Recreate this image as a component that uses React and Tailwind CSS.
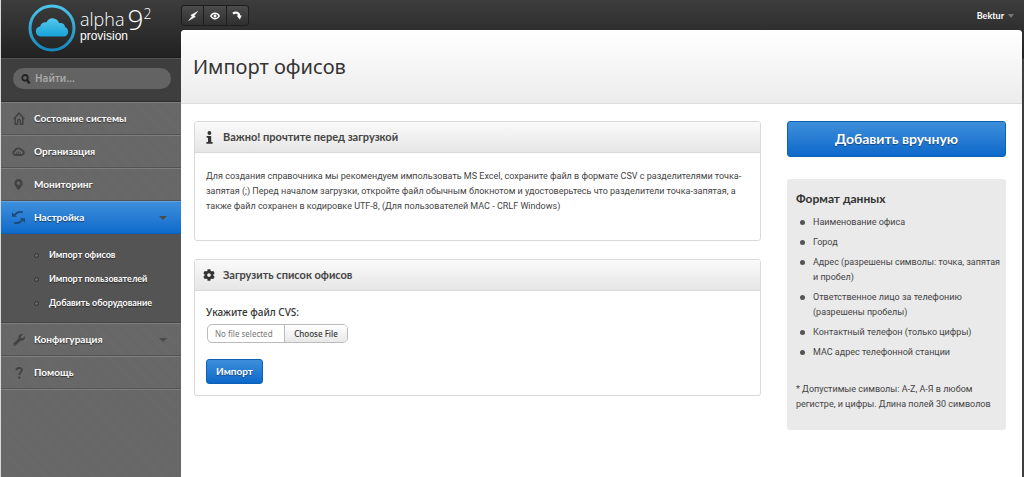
import { FaCog, FaMapMarkerAlt, FaWrench } from "react-icons/fa";

const HomeIcon = () => (
  <svg viewBox="0 0 12 13" className="w-3 h-[13px]" fill="none" stroke="currentColor" strokeWidth="1.5">
    <path d="M0.6 7 6 1.2 11.4 7" />
    <path d="M2.2 6v6.2h2.4V9a1.4 1.4 0 0 1 2.8 0v3.2h2.4V6" />
  </svg>
);

const CloudIcon = () => (
  <svg viewBox="0 0 13 9" className="w-[13px] h-[9px]" fill="none" stroke="currentColor" strokeWidth="1.8">
    <path d="M3.2 8a2.3 2.2 0 0 1-.3-4.3 3.6 3.2 0 0 1 6.6-.6 2.5 2.5 0 0 1 .4 4.9z" />
    <path d="M4.4 7V5.4M6.4 7V4.4M8.4 7V5.4" strokeWidth="1" />
  </svg>
);

const SyncIcon = () => (
  <svg viewBox="0 0 13 13" className="w-[13px] h-[13px]" fill="none" stroke="currentColor" strokeWidth="1.7">
    <path d="M10.8 1.4C8 .4 4.8 1 2.6 4.2M2.2 11.6C5 12.6 8.2 12 10.4 8.8" />
    <path d="M0 1.2v4.6h5zM13 11.8V7.2H8z" fill="currentColor" stroke="none" />
  </svg>
);

const QuestionIcon = () => (
  <svg viewBox="0 0 8 12" className="w-2 h-3" fill="none" stroke="currentColor" strokeWidth="1.8">
    <path d="M1.2 3.2C1.6 1.4 3 1 4.2 1c1.7 0 2.7.9 2.7 2.2C6.9 5.2 4.3 5.2 4.3 8" />
    <circle cx="4.3" cy="10.6" r="1.2" fill="currentColor" stroke="none" />
  </svg>
);

const InfoIcon = () => (
  <svg viewBox="0 0 7 13" className="w-[7px] h-[13px]" fill="currentColor">
    <circle cx="3.4" cy="2" r="1.9" />
    <path d="M.6 5h4.6v6H6.6v1.8H.4V11h1.6V6.8H.6z" />
  </svg>
);

const SearchIcon = () => (
  <svg viewBox="0 0 10 10" className="w-[10px] h-[10px] shrink-0 text-[#222]" fill="none" stroke="currentColor">
    <circle cx="4" cy="3.8" r="2.8" strokeWidth="1.8" />
    <path d="m6 6 2.6 3.4" strokeWidth="2.4" />
  </svg>
);

const BoltIcon = () => (
  <svg viewBox="0 0 10 10" className="w-[10px] h-[10px]" fill="currentColor">
    <path d="M9.6.4 2.8 4.2 4.2 5.2.6 9.6 7.4 5.8 6 4.8z" stroke="currentColor" strokeWidth="0.5" />
  </svg>
);

const EyeIcon = () => (
  <svg viewBox="0 0 10 8" className="w-[10px] h-2" fill="none" stroke="currentColor">
    <path d="M.8 4C2.8.4 7.2.4 9.2 4 7.2 7.6 2.8 7.6.8 4z" strokeWidth="1.5" />
    <circle cx="5" cy="4" r="1.2" fill="currentColor" strokeWidth="0.6" />
  </svg>
);

const RedoIcon = () => (
  <svg viewBox="0 0 10 9" className="w-[10px] h-[9px]" fill="none" stroke="currentColor">
    <path d="M1 2.6C3.6.6 7.2 1.6 7.2 5" strokeWidth="2.2" />
    <path d="M4.6 4.6h5.2L7.8 8.4z" fill="currentColor" stroke="none" />
  </svg>
);

const Logo = () => (
  <a href="#" className="flex items-start gap-1 text-white">
    <svg viewBox="0 0 48 48" className="w-12 h-12">
      <defs>
        <linearGradient id="logo" x1="0" y1="0" x2="0" y2="1">
          <stop offset="0" stopColor="#4cc4ea" />
          <stop offset="1" stopColor="#1688bd" />
        </linearGradient>
        <linearGradient id="cloud" x1="0" y1="0" x2="0" y2="1">
          <stop offset="0" stopColor="#55c8ec" />
          <stop offset="1" stopColor="#17a3d8" />
        </linearGradient>
      </defs>
      <circle cx="24" cy="24" r="22" fill="none" stroke="url(#logo)" strokeWidth="3" />
      <path
        d="M12.5 32.5a5 5 0 0 1-4.7-5c0-2.8 1.8-4.8 4.4-5 .4-3 3-4.8 6.2-4.2C20 15 22.6 14 25 14.3c3.4.5 5.6 2.4 6.2 5 2.8-.8 5.6.8 5.8 3.6 2 .8 3.2 2.6 3.2 4.8 0 2.8-1.9 4.8-4.2 4.8z"
        fill="url(#cloud)"
      />
    </svg>
    <span className="flex flex-col">
      <span className="flex items-start font-['Open_Sans',sans-serif] font-light h-[25px]">
        <span className="text-lg leading-[30px]">alpha</span>
        <span className="text-[28px] leading-[30px] ml-[3px]">9</span>
        <span className="text-sm leading-5">2</span>
      </span>
      <span className="font-['Liberation_Sans',sans-serif] text-xs leading-[14px]">provision</span>
    </span>
  </a>
);

const Caret = () => (
  <span className="border-x-[4px] border-t-[4px] border-x-transparent border-t-[#4a4a4a]" />
);

const subItems = ["Импорт офисов", "Импорт пользователей", "Добавить оборудование"];

const menu = [
  { title: "Состояние системы", icon: <HomeIcon /> },
  { title: "Организация", icon: <CloudIcon /> },
  { title: "Мониторинг", icon: <FaMapMarkerAlt size={11} /> },
  { title: "Настройка", icon: <SyncIcon />, active: true, caret: true, children: subItems },
  { title: "Конфигурация", icon: <FaWrench size={12} />, caret: true },
  { title: "Помощь", icon: <QuestionIcon /> },
];

const formatItems = [
  "Наименование офиса",
  "Город",
  "Адрес (разрешены символы: точка, запятая и пробел)",
  "Ответственное лицо за телефонию (разрешены пробелы)",
  "Контактный телефон (только цифры)",
  "MAC адрес телефонной станции",
];

const MenuItem = ({ item }) => (
  <li>
    <a
      href="#"
      className={
        item.active
          ? "flex items-center h-[33px] pl-[11px] pr-[14px] border-t border-t-[#5da3e0] border-b border-b-[#0b62bb] bg-linear-to-b from-[#3d8fdb] to-[#0c6bcb]"
          : "flex items-center h-[33px] pl-[11px] pr-[14px] border-t border-t-[#7e7e7e] border-b border-b-[#535353]"
      }
    >
      <span className={item.active ? "w-[22px] flex text-[#1d4a78]" : "w-[22px] flex text-[#424242]"}>
        <span className="w-[13px] flex justify-center">{item.icon}</span>
      </span>
      <span className="flex-1">{item.title}</span>
      {item.caret && <Caret />}
    </a>
    {item.children && (
      <ul className="bg-[#545454] pt-[9px] pb-[7px] border-b border-[#444] text-[9px]">
        {item.children.map((child) => (
          <li key={child}>
            <a href="#" className="flex items-center gap-[10px] h-6 pl-[33px]">
              <span className="w-[5px] h-[5px] rounded-full border border-[#333] bg-[#666]" />
              {child}
            </a>
          </li>
        ))}
      </ul>
    )}
  </li>
);

const Sidebar = () => (
  <aside className="w-[181px] shrink-0 border-l border-[#d8d8d8] text-white bg-[#676767] bg-[repeating-linear-gradient(45deg,#666_0px,#666_1px,#696969_1px,#696969_2px)]">
    <div className="h-[58px] pt-1 pl-[27px] bg-linear-to-b from-[#3d3d3d] to-[#222] border-b border-[#1c1c1c]">
      <Logo />
    </div>
    <div className="h-11 px-3 pt-[9px] bg-[#3e3e3e] border-t border-[#555] border-b border-b-[#2c2c2c]">
      <label className="flex items-center gap-1 h-[21px] w-[158px] px-2 rounded-full bg-[#636363]">
        <SearchIcon />
        <input
          type="search"
          aria-label="Поиск"
          placeholder="Найти..."
          className="w-full min-w-0 bg-transparent outline-none text-[10px] font-semibold text-white placeholder:text-[#aaa]"
        />
      </label>
    </div>
    <nav className="font-['Lato','Noto_Sans',sans-serif] text-[10px] font-bold [text-shadow:0_1px_1px_#0008]">
      <ul className="border-b border-[#7e7e7e]">
        {menu.map((item) => (
          <MenuItem key={item.title} item={item} />
        ))}
      </ul>
    </nav>
  </aside>
);

const toolButton = "flex-1 flex items-center justify-center border-r border-[#1d1d1d] last:border-r-0 hover:bg-[#555]";

const TopBar = () => (
  <header className="flex justify-between items-start h-[30px] pt-[5px] pr-2 text-white">
    <div className="flex w-[68px] h-[21px] rounded-[3px] border border-[#1d1d1d] bg-linear-to-b from-[#4b4b4b] to-[#303030] overflow-hidden">
      <button aria-label="Быстрые действия" className={toolButton}><BoltIcon /></button>
      <button aria-label="Просмотр" className={toolButton}><EyeIcon /></button>
      <button aria-label="Повторить" className={toolButton}><RedoIcon /></button>
    </div>
    <button className="flex items-center gap-1 h-[22px] font-['Lato','Noto_Sans',sans-serif] text-[9px] font-bold">
      Bektur
      <span className="border-x-[3px] border-t-[4px] border-x-transparent border-t-[#777]" />
    </button>
  </header>
);

const Card = ({ icon, title, children }) => (
  <section className="border border-[#d9d9d9] rounded-[3px] bg-white">
    <div className="flex items-center h-[31px] px-2 border-b border-[#d9d9d9] rounded-t-[2px] bg-linear-to-b from-[#fafafa] to-[#e6e6e6]">
      <span className="w-5 flex text-[#333]">
        <span className="w-3 flex justify-center">{icon}</span>
      </span>
      <h2 className="font-['Lato','Noto_Sans',sans-serif] text-[11px] font-bold text-[#444]">{title}</h2>
    </div>
    {children}
  </section>
);

const blueButton =
  "border border-[#0d62b5] bg-linear-to-b from-[#3d8fdb] to-[#0a68ca] text-white font-['Lato','Noto_Sans',sans-serif] font-bold rounded-[3px] [text-shadow:0_1px_1px_#0006]";

const App = () => {
  return (
    <div className="flex min-h-screen bg-[#333] font-['Noto_Sans','Open_Sans',sans-serif] text-[#444]">
      <Sidebar />
      <div className="flex-1 min-w-0 flex flex-col pr-[2px] bg-[linear-gradient(#3d3d3d,#222_58px,#3e3e3e_59px)]">
        <TopBar />
        <main className="flex-1 bg-white rounded-t-[4px] overflow-hidden">
          <div className="flex items-center h-[74px] px-3 border-b border-[#dcdcdc] bg-linear-to-b from-white to-[#ececec]">
            <h1 className="text-xl text-[#333]">Импорт офисов</h1>
          </div>

          <div className="flex items-start gap-[26px] pt-[17px] pl-[13px] pr-4 pb-6">
            <div className="flex-1 min-w-0 space-y-[18px]">
              <Card icon={<InfoIcon />} title="Важно! прочтите перед загрузкой">
                <p className="px-[11px] pt-4 pb-[26px] font-['Roboto','Noto_Sans',sans-serif] text-[9px] leading-[15px]">
                  Для создания справочника мы рекомендуем импользовать MS Excel, сохраните файл в формате CSV с разделителями точка-запятая (;) Перед началом загрузки, откройте файл обычным блокнотом и удостоверьтесь что разделители точка-запятая, а также файл сохранен в кодировке UTF-8, (Для пользователей MAC - CRLF Windows)
                </p>
              </Card>

              <Card icon={<FaCog size={12} />} title="Загрузить список офисов">
                <form className="px-[11px] pt-[13px] pb-[11px]">
                  <label htmlFor="file" className="block text-[10px] leading-4 font-medium text-[#333]">
                    Укажите файл CVS:
                  </label>
                  <div className="relative flex w-[141px] h-[19px] mt-1 ml-px border border-[#bbb] rounded-[5px] overflow-hidden text-[8px]">
                    <span className="flex-1 flex items-center pl-[7px] text-[#777]">No file selected</span>
                    <span className="w-[63px] flex items-center justify-center border-l border-[#bbb] bg-linear-to-b from-white to-[#e8e8e8] font-medium text-[#333]">
                      Choose File
                    </span>
                    <input id="file" type="file" className="absolute inset-0 w-full opacity-0 cursor-pointer" />
                  </div>
                  <button type="button" className={`${blueButton} mt-4 h-[25px] w-[57px] text-[10px]`}>
                    Импорт
                  </button>
                </form>
              </Card>
            </div>

            <aside className="w-[219px] shrink-0">
              <button className={`${blueButton} w-full h-9 text-sm`}>Добавить вручную</button>

              <div className="mt-[22px] pl-[9px] pr-1 pt-3 pb-[18px] rounded-[3px] bg-[#eaeaea] font-['Roboto','Noto_Sans',sans-serif] text-[9px] leading-[15px]">
                <h3 className="font-['Lato','Noto_Sans',sans-serif] text-xs leading-4 font-bold text-[#333]">Формат данных</h3>
                <ul className="mt-2 space-y-[5px]">
                  {formatItems.map((text) => (
                    <li key={text} className="flex items-start">
                      <span className="w-[5px] h-[5px] mt-[5px] ml-1 mr-2 shrink-0 rounded-full bg-[#555]" />
                      {text}
                    </li>
                  ))}
                </ul>
                <p className="mt-[22px]">
                  * Допустимые символы: A-Z, А-Я в любом регистре, и цифры. Длина полей 30 символов
                </p>
              </div>
            </aside>
          </div>
        </main>
      </div>
    </div>
  );
};

export default App;
